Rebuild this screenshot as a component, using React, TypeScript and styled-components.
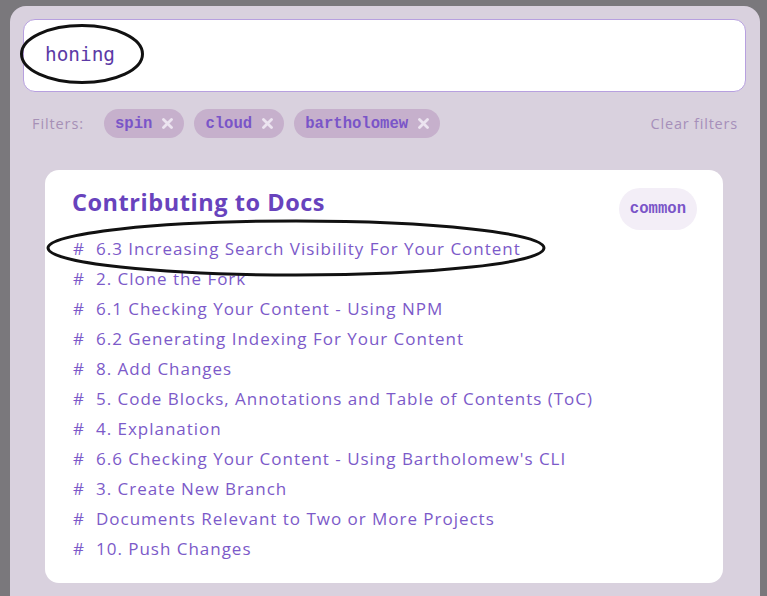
import React from "react";
import styled, { createGlobalStyle } from "styled-components";

const Global = createGlobalStyle`
  html, body { margin: 0; padding: 0; background: #7a787c; overflow: hidden; }
  body { font-family: "Open Sans", "Noto Sans", sans-serif; }
  * { box-sizing: border-box; }
`;

const Panel = styled.div`
  position: relative;
  margin: 6px 7px 0 10px;
  width: 750px;
  min-height: 640px;
  background: #d9d1de;
  border-radius: 16px 16px 0 0;
  padding: 13px 14px 0 13px;
`;

const SearchBox = styled.div`
  height: 73px;
  background: #ffffff;
  border: 1px solid #b7a0df;
  border-radius: 12px;
  display: flex;
  align-items: center;
  padding-left: 21px;
`;

const Query = styled.span`
  font-family: "DejaVu Sans Mono", monospace;
  font-size: 19.4px;
  color: #5c3aa6;
  padding-bottom: 3px;
`;

const FilterRow = styled.div`
  margin-top: 17px;
  height: 29px;
  display: flex;
  align-items: center;
  padding: 0 8px 0 9px;
`;

const FilterLabel = styled.span`
  font-size: 14.5px;
  letter-spacing: 0.9px;
  color: #a690b6;
  margin-right: 20px;
`;

const Chip = styled.span`
  display: inline-flex;
  align-items: center;
  height: 29px;
  padding: 0 11px 0 11px;
  margin-right: 10px;
  border-radius: 15px;
  background: #c6b0cc;
  font-family: "Liberation Mono", monospace;
  font-weight: bold;
  font-size: 15.6px;
  color: #7a55c8;
  gap: 10px;
`;

const ClearLink = styled.span`
  margin-left: auto;
  font-size: 14.5px;
  letter-spacing: 0.8px;
  color: #a68fba;
`;

const Card = styled.div`
  margin: 32px 23px 0 22px;
  background: #ffffff;
  border-radius: 14px;
  padding: 18px 26px 19px 27px;
`;

const CardHead = styled.div`
  display: flex;
  align-items: flex-start;
  justify-content: space-between;
  height: 42px;
  margin-bottom: 4px;
`;

const Title = styled.h2`
  margin: 0;
  line-height: 29px;
  font-size: 23.5px;
  font-weight: 700;
  color: #6843bd;
  letter-spacing: 0.55px;
`;

const Tag = styled.span`
  display: inline-flex;
  align-items: center;
  height: 42px;
  padding: 0 11px;
  border-radius: 21px;
  background: #f3eef7;
  font-family: "Liberation Mono", monospace;
  font-weight: bold;
  font-size: 15.6px;
  color: #7a55c8;
`;

const List = styled.ul`
  list-style: none;
  margin: 0;
  padding: 0;
`;

const Item = styled.li`
  height: 30px;
  line-height: 30px;
  font-size: 17px;
  color: #7c5ac9;
  letter-spacing: 0.98px;
  white-space: nowrap;
`;

const Hash = styled.span`
  display: inline-block;
  width: 23px;
  margin-left: 1px;
`;

const Mark = styled.svg`
  position: absolute;
  overflow: visible;
  pointer-events: none;
`;

const CloseIcon = () => (
  <svg width="11" height="11" viewBox="0 0 11 11">
    <path d="M1.5 1.5 L9.5 9.5 M9.5 1.5 L1.5 9.5" stroke="#ece4f0" strokeWidth="2.8" strokeLinecap="round" />
  </svg>
);

const filters = ["spin", "cloud", "bartholomew"];

const items = [
  "6.3 Increasing Search Visibility For Your Content",
  "2. Clone the Fork",
  "6.1 Checking Your Content - Using NPM",
  "6.2 Generating Indexing For Your Content",
  "8. Add Changes",
  "5. Code Blocks, Annotations and Table of Contents (ToC)",
  "4. Explanation",
  "6.6 Checking Your Content - Using Bartholomew's CLI",
  "3. Create New Branch",
  "Documents Relevant to Two or More Projects",
  "10. Push Changes",
];

export default function App() {
  return (
    <>
      <Global />
      <Panel>
        <SearchBox>
          <Query>honing</Query>
        </SearchBox>
        <FilterRow>
          <FilterLabel>Filters:</FilterLabel>
          {filters.map((f) => (
            <Chip key={f}>
              {f}
              <CloseIcon />
            </Chip>
          ))}
          <ClearLink>Clear filters</ClearLink>
        </FilterRow>
        <Card>
          <CardHead>
            <Title>Contributing to Docs</Title>
            <Tag>common</Tag>
          </CardHead>
          <List>
            {items.map((t) => (
              <Item key={t}>
                <Hash>#</Hash>
                {t}
              </Item>
            ))}
          </List>
        </Card>
        <Mark style={{ left: 10, top: 18 }} width="124" height="60">
          <ellipse cx="62" cy="30" rx="60.5" ry="28.5" fill="none" stroke="#111" strokeWidth="3" />
        </Mark>
        <Mark style={{ left: 37, top: 214 }} width="500" height="58">
          <ellipse cx="249" cy="28" rx="248" ry="27" fill="none" stroke="#111" strokeWidth="3" />
        </Mark>
      </Panel>
    </>
  );
}
